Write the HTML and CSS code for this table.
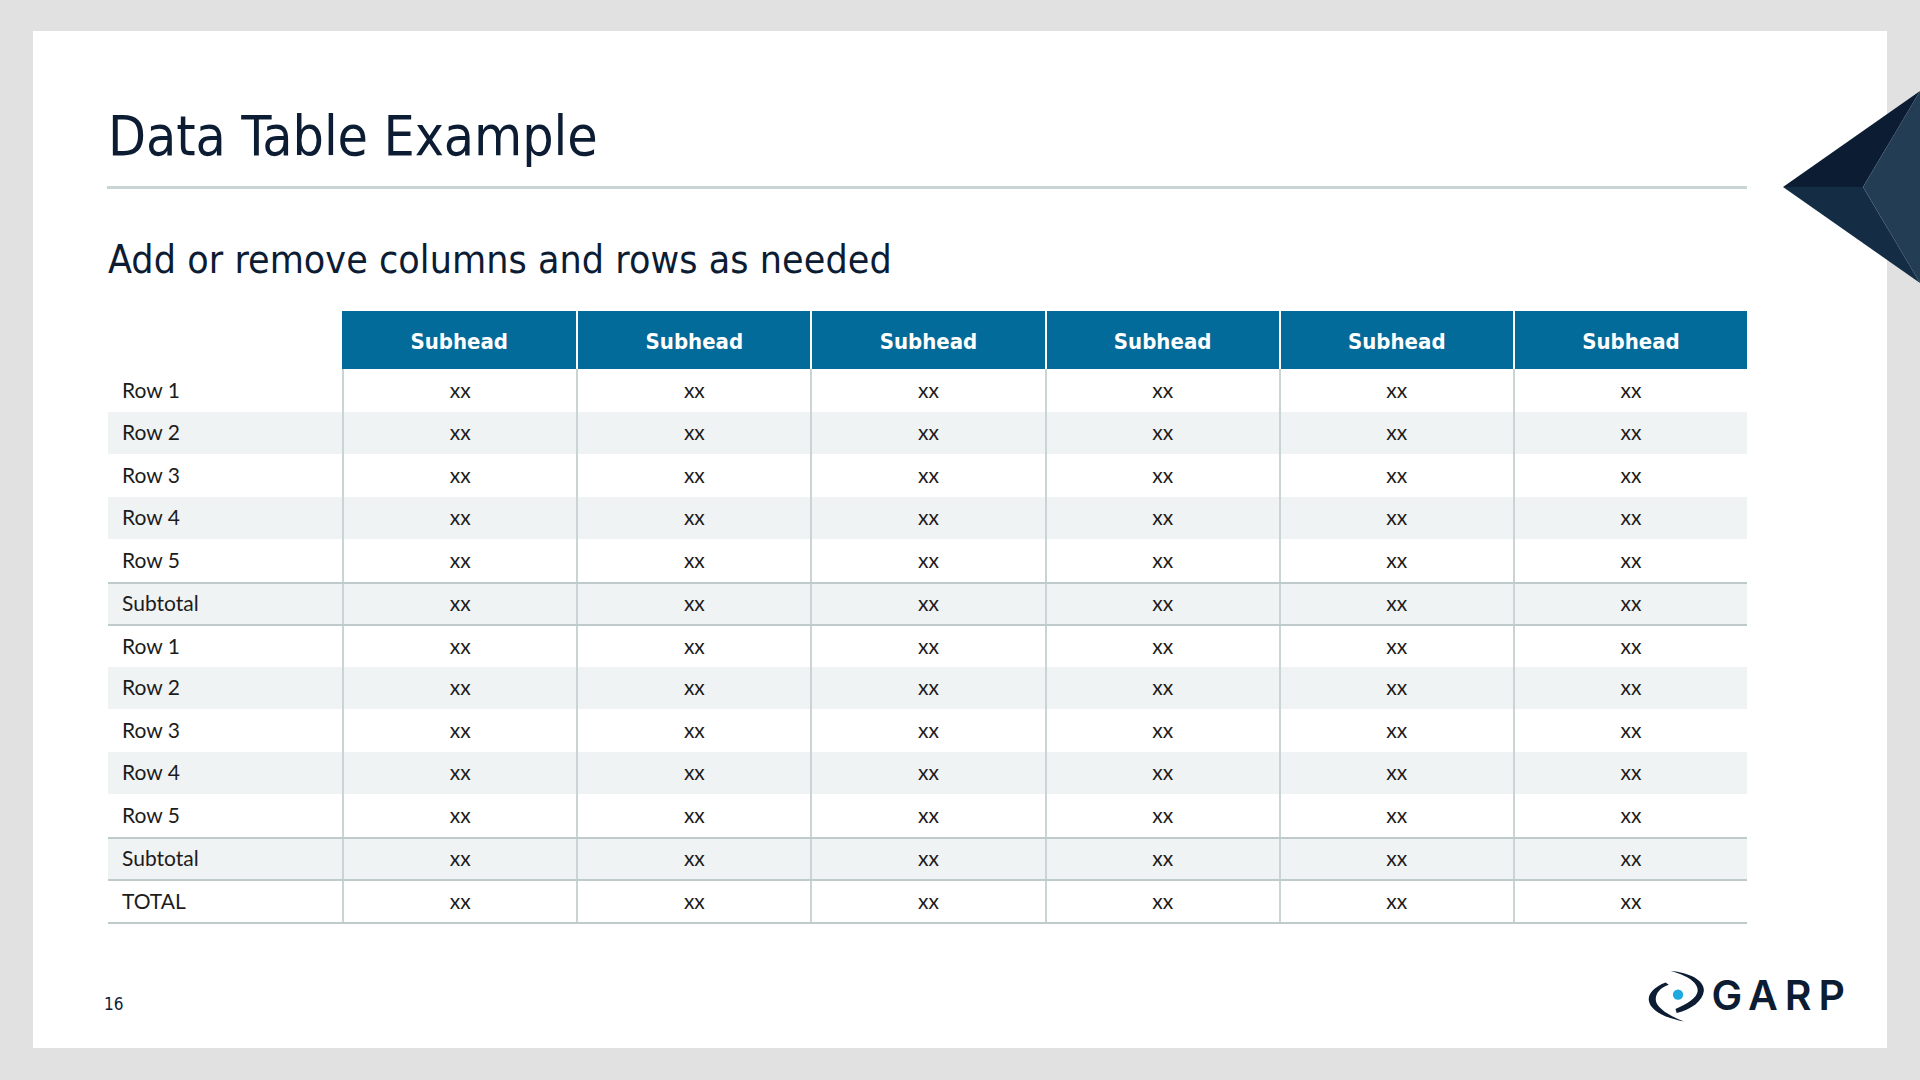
FILE: index.html
```html
<!DOCTYPE html>
<html lang="en">
<head>
<meta charset="utf-8">
<title>Data Table Example</title>
<link rel="stylesheet" href="styles.css">
</head>
<body>
<div class="slide">
  <h1 class="title">Data Table Example</h1>
  <div class="rule"></div>
  <h2 class="subtitle">Add or remove columns and rows as needed</h2>
  <div class="table">
    <div class="row head">
      <div class="blank"></div>
      <div class="hcell">Subhead</div>
      <div class="hcell">Subhead</div>
      <div class="hcell">Subhead</div>
      <div class="hcell">Subhead</div>
      <div class="hcell">Subhead</div>
      <div class="hcell">Subhead</div>
    </div>
    <div class="row"><div class="cell label">Row 1</div><div class="cell">xx</div><div class="cell">xx</div><div class="cell">xx</div><div class="cell">xx</div><div class="cell">xx</div><div class="cell">xx</div></div>
    <div class="row alt"><div class="cell label">Row 2</div><div class="cell">xx</div><div class="cell">xx</div><div class="cell">xx</div><div class="cell">xx</div><div class="cell">xx</div><div class="cell">xx</div></div>
    <div class="row"><div class="cell label">Row 3</div><div class="cell">xx</div><div class="cell">xx</div><div class="cell">xx</div><div class="cell">xx</div><div class="cell">xx</div><div class="cell">xx</div></div>
    <div class="row alt"><div class="cell label">Row 4</div><div class="cell">xx</div><div class="cell">xx</div><div class="cell">xx</div><div class="cell">xx</div><div class="cell">xx</div><div class="cell">xx</div></div>
    <div class="row"><div class="cell label">Row 5</div><div class="cell">xx</div><div class="cell">xx</div><div class="cell">xx</div><div class="cell">xx</div><div class="cell">xx</div><div class="cell">xx</div></div>
    <div class="row alt sep"><div class="cell label">Subtotal</div><div class="cell">xx</div><div class="cell">xx</div><div class="cell">xx</div><div class="cell">xx</div><div class="cell">xx</div><div class="cell">xx</div></div>
    <div class="row sep"><div class="cell label">Row 1</div><div class="cell">xx</div><div class="cell">xx</div><div class="cell">xx</div><div class="cell">xx</div><div class="cell">xx</div><div class="cell">xx</div></div>
    <div class="row alt"><div class="cell label">Row 2</div><div class="cell">xx</div><div class="cell">xx</div><div class="cell">xx</div><div class="cell">xx</div><div class="cell">xx</div><div class="cell">xx</div></div>
    <div class="row"><div class="cell label">Row 3</div><div class="cell">xx</div><div class="cell">xx</div><div class="cell">xx</div><div class="cell">xx</div><div class="cell">xx</div><div class="cell">xx</div></div>
    <div class="row alt"><div class="cell label">Row 4</div><div class="cell">xx</div><div class="cell">xx</div><div class="cell">xx</div><div class="cell">xx</div><div class="cell">xx</div><div class="cell">xx</div></div>
    <div class="row"><div class="cell label">Row 5</div><div class="cell">xx</div><div class="cell">xx</div><div class="cell">xx</div><div class="cell">xx</div><div class="cell">xx</div><div class="cell">xx</div></div>
    <div class="row alt sep"><div class="cell label">Subtotal</div><div class="cell">xx</div><div class="cell">xx</div><div class="cell">xx</div><div class="cell">xx</div><div class="cell">xx</div><div class="cell">xx</div></div>
    <div class="row sep total"><div class="cell label">TOTAL</div><div class="cell">xx</div><div class="cell">xx</div><div class="cell">xx</div><div class="cell">xx</div><div class="cell">xx</div><div class="cell">xx</div></div>
  </div>
  <div class="footer">
    <div class="pagenum">16</div>
    <div class="logo">
      <svg class="swirl" width="62" height="58" viewBox="18 19 60 56" aria-hidden="true">
        <path fill="#0c1c33" d="M41.7,22.7 C60,24 75,32 74,42 C73,52 62,60 47.7,63.5 L46.5,59.5 C58,55 67,49 68,42.5 C69,34 58,27 41.7,22.7 Z"/>
        <path fill="#0c1c33" d="M37,34 C26,38 20,45 20.7,51 C21.5,60 35,68 55,71.7 C40,66 28,58 27.5,51 C27,45 31,39 40,36 Z"/>
        <circle cx="49" cy="45.7" r="5" fill="#1ea8e0"/>
      </svg>
      <span class="garp">GARP</span>
    </div>
  </div>
</div>
<svg class="corner" width="137" height="192" viewBox="0 0 137 192" aria-hidden="true">
  <polygon points="0,96 137,0 80,96" fill="#0c1c33"/>
  <polygon points="0,96 80,96 137,192" fill="#142d45"/>
  <polygon points="137,0 137,192 80,96" fill="#233d54"/>
</svg>
</body>
</html>
```

FILE: styles.css
```css
* { box-sizing: border-box; }

html, body {
  margin: 0;
  padding: 0;
}

body {
  width: 1920px;
  height: 1080px;
  background: #e1e1e1;
  position: relative;
  overflow: hidden;
  padding-top: 31px;
  padding-left: 33px;
}

.slide {
  width: 1854px;
  height: 1017px;
  background: #ffffff;
  display: flex;
  flex-direction: column;
  padding: 73px 38px 22px 75px;
}

.title {
  margin: 0;
  font-family: "DejaVu Sans Condensed", "DejaVu Sans", sans-serif;
  font-stretch: condensed;
  font-weight: normal;
  font-size: 55px;
  line-height: 64px;
  letter-spacing: -0.1px;
  color: #0c1c33;
}

.rule {
  width: 1640px;
  height: 3px;
  margin-top: 18px;
  margin-left: -1px;
  background: #cad4d4;
}

.subtitle {
  margin: 48px 0 0 0;
  font-family: "DejaVu Sans Condensed", "DejaVu Sans", sans-serif;
  font-stretch: condensed;
  font-weight: normal;
  font-size: 39px;
  line-height: 46px;
  letter-spacing: 0.05px;
  color: #0c1c33;
}

.table {
  width: 1639px;
  margin-top: 28px;
  font-family: Lato, "Liberation Sans", sans-serif;
  font-size: 21px;
  color: #1c1c1c;
}

.row {
  display: grid;
  grid-template-columns: repeat(7, 1fr);
  height: 42.5px;
}

.row.alt { background: #f0f3f4; }

.row.sep { border-top: 2px solid #bfcacb; }

.row.total {
  height: 44.5px;
  border-bottom: 2px solid #bfcacb;
}

.row.head { height: 58px; }

.hcell {
  background: #036b9a;
  color: #ffffff;
  font-family: "DejaVu Sans Condensed", "DejaVu Sans", sans-serif;
  font-stretch: condensed;
  font-weight: bold;
  font-size: 22px;
  padding-top: 2px;
  display: flex;
  align-items: center;
  justify-content: center;
}

.hcell + .hcell { border-left: 2px solid #ffffff; }

.cell {
  display: flex;
  align-items: center;
  justify-content: center;
  line-height: 1;
  padding-bottom: 2px;
}

.cell + .cell { border-left: 2px solid #cad4d5; }

.cell.label {
  justify-content: flex-start;
  padding-left: 14px;
}

.footer {
  margin-top: auto;
  height: 62px;
  display: flex;
  align-items: center;
  justify-content: space-between;
}

.pagenum {
  margin-top: 17px;
  margin-left: -4px;
  font-family: "DejaVu Sans Condensed", "DejaVu Sans", sans-serif;
  font-stretch: condensed;
  font-size: 17px;
  line-height: 20px;
  color: #0c1c33;
}

.logo {
  display: flex;
  align-items: center;
  gap: 3px;
}

.swirl {
  display: block;
  margin-top: 2px;
}

.garp {
  font-family: Inter, "Liberation Sans", sans-serif;
  font-weight: 600;
  font-size: 41px;
  line-height: 41px;
  letter-spacing: 7px;
  margin-right: -3px;
  color: #0c1c33;
}

.corner {
  position: absolute;
  left: 1783px;
  top: 91px;
  display: block;
}
```
